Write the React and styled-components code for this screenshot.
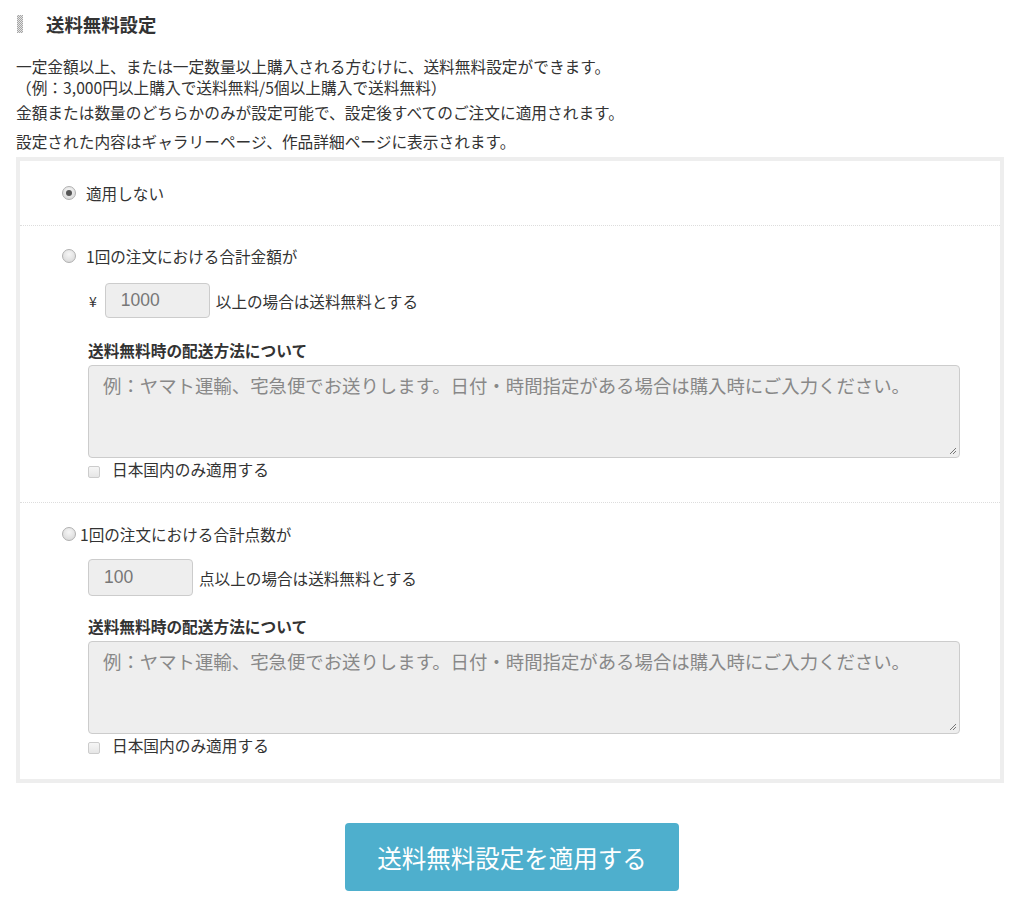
import styled, { createGlobalStyle } from "styled-components"

const Global = createGlobalStyle`
  body {
    margin: 0;
    background: #fff;
    font-family: "Noto Sans CJK JP", "Noto Sans", sans-serif;
    color: #333;
  }
`

const Page = styled.div`
  width: 1024px;
  padding: 13px 20px 0 16px;
  box-sizing: border-box;
`

const Heading = styled.h2`
  display: flex;
  align-items: center;
  gap: 23px;
  margin: 0 0 21px 0;
  height: 22px;
  font-size: 18.4px;
  font-weight: bold;
  color: #333;
`

const Hatch = styled.span`
  display: inline-block;
  width: 6px;
  height: 18px;
  margin-left: 1px;
  background: repeating-conic-gradient(#a5a5a5 0 25%, #e4e4e4 0 50%) 0 0 / 2px 2px;
`

const Desc = styled.p`
  margin: 0 0 ${p => p.$mb || 0}px 0;
  font-size: 15.7px;
  line-height: 21px;
  color: #333;
`

const Box = styled.div`
  border: 4px solid #eee;
  background: #fff;
`

const Section = styled.div`
  padding: ${p => p.$pt}px 40px ${p => p.$pb}px 42px;
  border-bottom: ${p => (p.$last ? "none" : "1px dotted #ddd")};
`

const OptionRow = styled.label`
  display: flex;
  align-items: center;
  gap: ${p => p.$gap || 10}px;
  height: 20px;
  line-height: 20px;
  font-size: 15.6px;
`

const Radio = styled.span`
  flex: none;
  width: 14px;
  height: 14px;
  border-radius: 50%;
  box-sizing: border-box;
  border: 1px solid #b0b0b0;
  background: radial-gradient(circle at 50% 35%, #f6f6f6, #d4d4d4);
  display: flex;
  align-items: center;
  justify-content: center;
  &::after {
    content: "";
    width: 6px;
    height: 6px;
    border-radius: 50%;
    background: ${p => (p.$checked ? "#555" : "transparent")};
  }
`

const Indent = styled.div`
  margin-left: 26px;
`

const AmountRow = styled.div`
  display: flex;
  align-items: center;
  margin-top: ${p => p.$mt}px;
  font-size: 15.6px;
  gap: 6px;
`

const Yen = styled.span`
  font-size: 14px;
  margin-left: 1px;
  margin-right: 2px;
`

const NumInput = styled.div`
  width: 105px;
  height: ${p => p.$h}px;
  box-sizing: border-box;
  border: 1px solid #ccc;
  border-radius: 4px;
  background: #eee;
  color: #777;
  font-size: 17.5px;
  font-family: "Liberation Sans", "Noto Sans", sans-serif;
  display: flex;
  align-items: center;
  padding-left: 15px;
`

const FieldLabel = styled.div`
  margin-top: ${p => p.$mt}px;
  font-size: 15.7px;
  font-weight: bold;
  height: 18px;
  line-height: 18px;
`

const TextArea = styled.div`
  position: relative;
  margin-top: 5px;
  width: 872px;
  height: 93px;
  box-sizing: border-box;
  border: 1px solid #ccc;
  border-radius: 4px;
  background: #eee;
  color: #888;
  font-size: 18.4px;
  padding: 7px 14px;
  line-height: 24px;
  white-space: nowrap;
`

const Grip = styled.svg`
  position: absolute;
  right: 2px;
  bottom: 2px;
`

const CheckRow = styled.label`
  display: flex;
  align-items: center;
  gap: 12px;
  margin-top: 3px;
  height: 18px;
  line-height: 18px;
  font-size: 15.7px;
`

const Check = styled.span`
  flex: none;
  width: 12px;
  height: 12px;
  margin-top: 4px;
  box-sizing: border-box;
  border: 1px solid #ccc;
  border-radius: 2px;
  background: linear-gradient(#f6f6f6, #e6e6e6);
`

const ButtonWrap = styled.div`
  display: flex;
  justify-content: center;
  padding: 40px 0 11px 0;
`

const Submit = styled.button`
  width: 334px;
  height: 68px;
  border: none;
  border-radius: 4px;
  background: #4eafcd;
  color: #fff;
  font-size: 24.5px;
  font-family: "Noto Sans CJK JP", sans-serif;
  margin-left: 4px;
`

const placeholder = "例：ヤマト運輸、宅急便でお送りします。日付・時間指定がある場合は購入時にご入力ください。"

const ShippingText = () => (
  <>
    <TextArea>
      {placeholder}
      <Grip width="10" height="10" viewBox="0 0 10 10">
        <path d="M9 3 L3 9 M9 6 L6 9" stroke="#777" strokeWidth="1" />
      </Grip>
    </TextArea>
    <CheckRow>
      <Check />
      日本国内のみ適用する
    </CheckRow>
  </>
)

const App = () => {
  return (
    <Page>
      <Global />
      <Heading>
        <Hatch />
        送料無料設定
      </Heading>
      <Desc $mb={4}>
        一定金額以上、または一定数量以上購入される方むけに、送料無料設定ができます。
        <br />
        （例：3,000円以上購入で送料無料/5個以上購入で送料無料）
      </Desc>
      <Desc $mb={8}>金額または数量のどちらかのみが設定可能で、設定後すべてのご注文に適用されます。</Desc>
      <Desc $mb={5}>設定された内容はギャラリーページ、作品詳細ページに表示されます。</Desc>
      <Box>
        <Section $pt={22} $pb={22}>
          <OptionRow>
            <Radio $checked />
            適用しない
          </OptionRow>
        </Section>
        <Section $pt={20} $pb={23}>
          <OptionRow>
            <Radio />
            1回の注文における合計金額が
          </OptionRow>
          <Indent>
            <AmountRow $mt={17}>
              <Yen>¥</Yen>
              <NumInput $h={35}>1000</NumInput>
              以上の場合は送料無料とする
            </AmountRow>
            <FieldLabel $mt={24}>送料無料時の配送方法について</FieldLabel>
            <ShippingText />
          </Indent>
        </Section>
        <Section $pt={21} $pb={24} $last>
          <OptionRow $gap={4}>
            <Radio />
            1回の注文における合計点数が
          </OptionRow>
          <Indent>
            <AmountRow $mt={15}>
              <NumInput $h={37}>100</NumInput>
              点以上の場合は送料無料とする
            </AmountRow>
            <FieldLabel $mt={22}>送料無料時の配送方法について</FieldLabel>
            <ShippingText />
          </Indent>
        </Section>
      </Box>
      <ButtonWrap>
        <Submit>送料無料設定を適用する</Submit>
      </ButtonWrap>
    </Page>
  )
}

export default App
